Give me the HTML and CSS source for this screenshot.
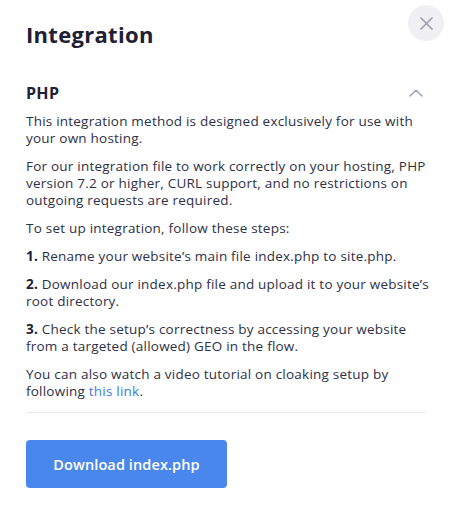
FILE: index.html
```html
<!DOCTYPE html>
<html lang="en">
<head>
<meta charset="utf-8">
<title>Integration</title>
<link rel="stylesheet" href="styles.css">
</head>
<body>
<div class="modal">
  <button class="close" aria-label="Close">
    <svg width="13" height="13" viewBox="0 0 13 13"><path d="M1 1L12 12M12 1L1 12" stroke="#9ca0b3" stroke-width="1.7" stroke-linecap="round"/></svg>
  </button>
  <h1 class="title">Integration</h1>
  <div class="section-head">
    <h2 class="section-title">PHP</h2>
    <svg class="chevron" width="14" height="8" viewBox="0 0 14 8"><path d="M1 7L7 1.2L13 7" fill="none" stroke="#9ca0b3" stroke-width="1.5" stroke-linecap="round" stroke-linejoin="round"/></svg>
  </div>
  <div class="content">
    <p>This integration method is designed exclusively for use with your own hosting.</p>
    <p>For our integration file to work correctly on your hosting, PHP version 7.2 or higher, CURL support, and no restrictions on outgoing requests are required.</p>
    <p>To set up integration, follow these steps:</p>
    <p class="step"><b>1.</b> Rename your website’s main file index.php to site.php.</p>
    <p class="step"><b>2.</b> Download our index.php file and upload it to your website’s root directory.</p>
    <p class="step"><b>3.</b> Check the setup’s correctness by accessing your website from a targeted (allowed) GEO in the flow.</p>
    <p>You can also watch a video tutorial on cloaking setup by following <a href="#" class="link">this link</a>.</p>
  </div>
  <hr class="divider">
  <button class="download">Download index.php</button>
</div>
</body>
</html>
```
FILE: styles.css
```css
html, body {
  margin: 0;
  padding: 0;
  background: #ffffff;
}
body {
  font-family: "Open Sans", "Liberation Sans", sans-serif;
  color: #2d3047;
}
.modal {
  position: relative;
  width: 451px;
  height: 512px;
  box-sizing: border-box;
  padding: 18px 25px 0 26px;
}
.close {
  position: absolute;
  top: 5px;
  right: 7px;
  width: 36px;
  height: 36px;
  border-radius: 50%;
  border: none;
  background: #f0f0f4;
  display: flex;
  align-items: center;
  justify-content: center;
  padding: 0;
}
.title {
  margin: 0;
  font-size: 22px;
  line-height: 32px;
  font-weight: 700;
  letter-spacing: 0.3px;
  color: #1e2034;
}
.section-head {
  display: flex;
  align-items: center;
  justify-content: space-between;
  margin-top: 32px;
  padding-right: 3px;
}
.section-title {
  margin: 0;
  font-size: 16px;
  line-height: 22px;
  font-weight: 700;
  letter-spacing: 0.3px;
  color: #1e2034;
}
.content {
  margin-top: 9px;
  margin-right: -8px;
  font-size: 13.5px;
  line-height: 17px;
  letter-spacing: 0.22px;
}
.content p {
  margin: 0 0 11px;
}
.content p:last-child {
  margin-bottom: 0;
}
.content b {
  font-weight: 700;
  color: #1e2034;
}
.link {
  color: #3a7de8;
  text-decoration: none;
}
.divider {
  border: none;
  border-top: 1px solid #ebebf3;
  margin: 12px 0 0;
}
.download {
  margin-top: 27px;
  width: 201px;
  height: 48px;
  border: none;
  border-radius: 4px;
  background: #4a87ec;
  color: #ffffff;
  font-family: "Open Sans", "Liberation Sans", sans-serif;
  font-size: 14.5px;
  font-weight: 600;
  letter-spacing: 0.1px;
}
```
